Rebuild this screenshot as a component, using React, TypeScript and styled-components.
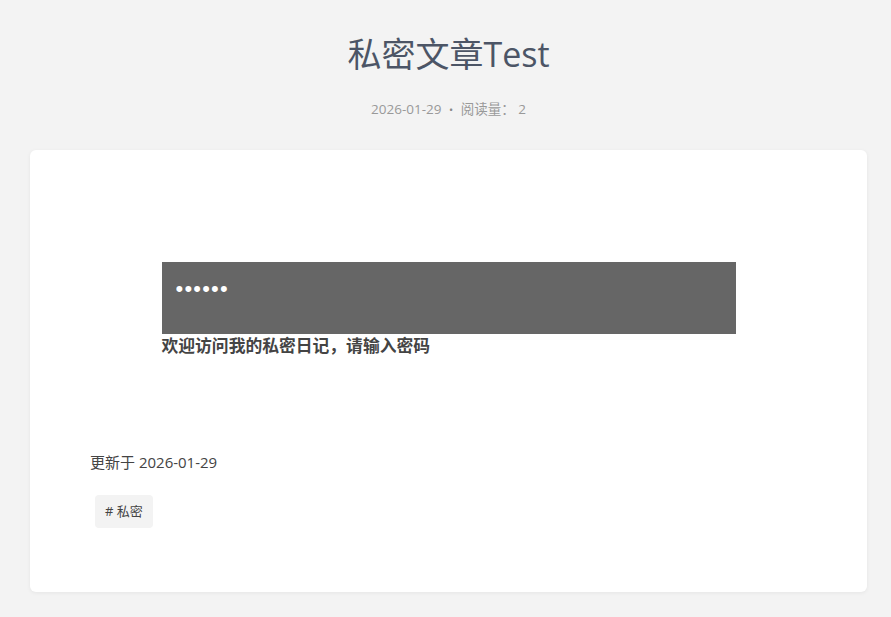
import styled, { createGlobalStyle } from "styled-components";

const Global = createGlobalStyle`
  body {
    margin: 0;
    background: #f3f3f3;
    font-family: "Open Sans", "Noto Sans CJK SC", sans-serif;
  }
`;

function App() {
  return (
    <>
      <Global />
      <Page>
        <Header>
          <Title>私密文章Test</Title>
          <Meta>
            2026-01-29 <Dot>•</Dot> 阅读量： 2
          </Meta>
        </Header>
        <Card>
          <LockBox>
            <Password type="password" defaultValue="123456" readOnly />
            <Hint>欢迎访问我的私密日记，请输入密码</Hint>
          </LockBox>
          <Updated>更新于 2026-01-29</Updated>
          <Tags>
            <Tag># 私密</Tag>
          </Tags>
        </Card>
      </Page>
    </>
  );
}

export default App;

const Page = styled.div`
  width: 891px;
  height: 617px;
  box-sizing: border-box;
  padding: 0 24px 0 30px;
  overflow: hidden;
`;

const Header = styled.div`
  display: flex;
  flex-direction: column;
  align-items: center;
  padding-top: 30px;
  height: 120px;
  box-sizing: border-box;
`;

const Title = styled.h1`
  margin: 0;
  font-size: 34px;
  font-weight: 400;
  line-height: 48px;
  color: #4c5566;
`;

const Meta = styled.div`
  margin-top: 20px;
  font-size: 13.5px;
  color: #999;
`;

const Dot = styled.span`
  margin: 0 4px;
  font-size: 11px;
  color: #888;
`;

const Card = styled.div`
  margin-top: 30px;
  width: 837px;
  height: 442px;
  box-sizing: border-box;
  background: #fff;
  border-radius: 6px;
  box-shadow: 0 1px 4px rgba(0, 0, 0, 0.06);
  padding: 112px 60px 0;
`;

const LockBox = styled.div`
  width: 574px;
  margin: 0 auto;
  display: flex;
  flex-direction: column;
`;

const Password = styled.input`
  width: 100%;
  height: 72px;
  box-sizing: border-box;
  border: none;
  outline: none;
  background: #666;
  color: #fff;
  padding: 0 14px 18px;
  font-size: 22px;
  letter-spacing: 1.2px;
`;

const Hint = styled.div`
  margin-top: 1px;
  font-size: 16.8px;
  font-weight: 700;
  line-height: 22px;
  color: #444;
`;

const Updated = styled.div`
  margin-top: 94px;
  font-size: 15px;
  color: #444;
`;

const Tags = styled.div`
  display: flex;
  margin-top: 23px;
  padding-left: 5px;
`;

const Tag = styled.span`
  background: #f3f3f3;
  border-radius: 4px;
  padding: 7px 10px;
  font-size: 13px;
  line-height: 19px;
  color: #444;
`;
